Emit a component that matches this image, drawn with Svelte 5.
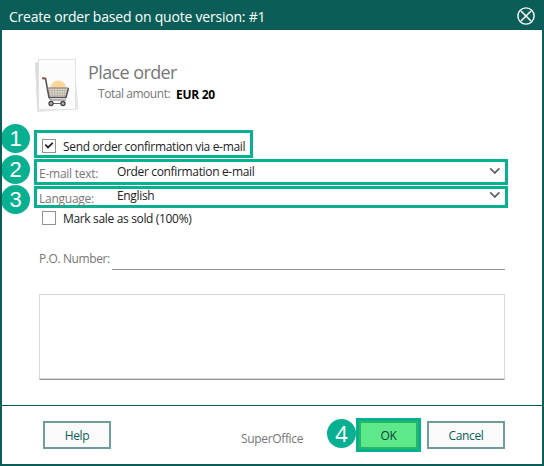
<script>
  let sendConfirmation = $state(true);
  let markSold = $state(false);
</script>

{#snippet chevron()}
  <svg class="chevron" width="12" height="8" viewBox="0 0 12 8"><path d="M1.2 1.3 5.8 5.9 10.4 1.3" fill="none" stroke="#666" stroke-width="1.8" /></svg>
{/snippet}

{#snippet checkbox(checked)}
  <span class="check">
    {#if checked}
      <svg width="12" height="12" viewBox="0 0 12 12"><path d="M2.3 4.5 5 7.4 9.8 2.8" fill="none" stroke="#222" stroke-width="1.8" /></svg>
    {/if}
  </span>
{/snippet}

<div class="dialog">
  <header>
    <h1>Create order based on quote version: #1</h1>
    <svg width="20" height="20" viewBox="0 0 20 20" fill="none" stroke="#fff">
      <circle cx="10" cy="10" r="8.1" stroke-width="1.4" />
      <path d="M5 5 15 15M15 5 5 15" stroke-width="1.5" />
    </svg>
  </header>

  <main>
    <section class="intro">
      <svg width="46" height="58" viewBox="0 0 46 58">
        <path d="M1 8 40 4 44.5 54 3.5 57Z" fill="#e6e6e6" />
        <path d="M1 8 5 7V55L3.5 57Z" fill="#dcdcdc" />
        <rect x="4.5" y="4.5" width="37" height="50" fill="#fcfcfc" stroke="#e2e2e2" />
        <path d="M16 33a8.3 8.3 0 0 1 16.5 0Z" fill="#f9d79a" />
        <path d="M13 33H34L32 42H15Z" fill="#e4dccf" />
        <path d="M15.5 33l.8 9M18 33l.5 9M20.5 33l.3 9M23.3 33v9M26 33l-.3 9M28.7 33l-.7 9M31.3 33l-1 9M13 35.5H34M14 38H33M14.5 40.3H33" fill="none" stroke="#a8a198" stroke-width=".6" />
        <path d="M9 23.5h2.5L15 42.5H32L34.5 33" fill="none" stroke="#56565a" stroke-width="1.6" />
        <path d="M13 33H34.5M15 42.5l1.5 2.5H32" fill="none" stroke="#77777a" stroke-width="1" />
        <path d="M17 48.5H31" stroke="#666" stroke-width="1" />
        <circle cx="17" cy="48.5" r="2" fill="#bbb" stroke="#444" stroke-width="1.3" />
        <circle cx="29" cy="48.5" r="2" fill="#bbb" stroke="#444" stroke-width="1.3" />
        <path d="M8 23.3h3.3" stroke="#a84944" stroke-width="1.8" />
      </svg>
      <div class="headline">
        <h2>Place order</h2>
        <p><span class="amount-label">Total amount:</span><b>EUR 20</b></p>
      </div>
    </section>

    <div class="marked confirm">
      <i class="badge">1</i>
      {@render checkbox(sendConfirmation)}
      <span class="send">Send order confirmation via e-mail</span>
    </div>
    <div class="marked email">
      <i class="badge">2</i>
      <span class="label">E-mail text:</span>
      <span class="value">Order confirmation e-mail</span>
      {@render chevron()}
    </div>
    <div class="marked language">
      <i class="badge">3</i>
      <span class="label">Language:</span>
      <span class="value">English</span>
      {@render chevron()}
    </div>
    <div class="sold">
      {@render checkbox(markSold)}
      <span class="sold-text">Mark sale as sold (100%)</span>
    </div>
    <div class="po">
      <span class="po-label">P.O. Number:</span>
      <span class="line"></span>
    </div>
    <div class="notes"></div>
  </main>

  <footer>
    <div class="button help"><span>Help</span></div>
    <span class="brand">SuperOffice</span>
    <div class="ok-mark">
      <i class="badge">4</i>
      <div class="button ok"><span>OK</span></div>
    </div>
    <div class="button cancel"><span>Cancel</span></div>
  </footer>
</div>

<style>
  .dialog {
    box-sizing: border-box;
    width: 544px;
    height: 466px;
    display: flex;
    flex-direction: column;
    border: 2px solid #0a5e57;
    border-top: 0;
    background: #fff;
    font: 12px/16px "Open Sans", "Noto Sans", sans-serif;
    letter-spacing: -0.34px;
    color: #222;
    white-space: nowrap;
    overflow: hidden;
  }
  h1, h2, p { margin: 0; font-weight: 400; }
  header {
    box-sizing: border-box;
    height: 30px;
    flex: none;
    display: flex;
    justify-content: space-between;
    padding: 6px 6px 0 7px;
    background: #0a5e57;
    color: #fff;
  }
  h1 { font-size: 14px; line-height: 22px; letter-spacing: -0.21px; }
  main { height: 375px; flex: none; display: flex; flex-direction: column; align-items: flex-start; }
  .intro { display: flex; height: 100px; }
  .intro > svg { margin: 25px 0 0 32px; }
  .headline { padding: 30px 0 0 8px; color: #777; }
  h2 { font-size: 18px; line-height: 24px; letter-spacing: -0.6px; }
  p { display: flex; padding: 2px 0 0 10px; }
  .amount-label { width: 78px; letter-spacing: -0.45px; }
  b { color: #000; letter-spacing: -0.3px; padding-top: 1px; }
  .marked {
    position: relative;
    box-sizing: border-box;
    display: flex;
    margin-left: 32px;
    border: 3px solid #08b092;
    width: 474px;
  }
  .confirm { width: 219px; height: 28px; padding: 6px 0 0 5px; }
  .email { height: 26px; margin-top: 1px; }
  .language { height: 22px; margin-top: 1px; }
  .badge {
    position: absolute;
    left: -36px;
    top: -9px;
    width: 29px;
    height: 29px;
    border-radius: 50%;
    background: #08b092;
    color: #fff;
    font: 22px/29px "Liberation Sans", Arial, sans-serif;
    letter-spacing: 0;
    text-align: center;
  }
  .email .badge { top: -7px; }
  .language .badge { top: -4px; }
  .check {
    box-sizing: border-box;
    flex: none;
    width: 14px;
    height: 14px;
    border: 1px solid #929292;
    display: flex;
  }
  .send { margin: 0 0 0 7px; }
  .label { width: 78px; padding: 4px 0 0 2px; box-sizing: border-box; color: #777; letter-spacing: -0.25px; }
  .value { flex: 1; padding: 2px 0 0 2px; }
  .language .label { padding-top: 2px; }
  .language .value { padding-top: 0; margin-top: -1px; }
  .chevron { margin: 5px 4px 0 0; }
  .language .chevron { margin-top: 2px; }
  .sold { display: flex; height: 18px; padding: 3px 0 0 40px; }
  .sold-text { margin-left: 7px; }
  .po { display: flex; height: 41px; width: 503px; box-sizing: border-box; padding: 22px 0 0 37px; color: #777; }
  .po-label { width: 73px; letter-spacing: -0.4px; }
  .line { flex: 1; height: 18px; border-bottom: 1px solid #929292; }
  .notes {
    box-sizing: border-box;
    width: 466px;
    height: 86px;
    margin: 24px 0 0 37px;
    border: 1px solid #d9d9d9;
    box-shadow: inset 0 -1px #d9d9d9;
    border-bottom-color: #929292;
  }
  footer { display: flex; flex: 1; border-top: 1px solid #0a5e57; padding-left: 41px; }
  .button {
    box-sizing: border-box;
    height: 28px;
    border: 2px solid #719c9c;
    background: #fafafa;
    color: #0a5e57;
    text-align: center;
    line-height: 25px;
  }
  .help { width: 68px; margin-top: 15px; }
  .brand { width: 115px; margin: 25px 0 0 130px; color: #777; }
  .ok-mark { position: relative; width: 59px; height: 28px; border: 3px solid #08b092; margin-top: 12px; }
  .ok-mark .badge { left: -32px; top: -2px; font-family: "Open Sans", sans-serif; line-height: 28px; }
  .ok { background: #5de98a; border-color: #28b864; color: #153d38; }
  .cancel { width: 78px; margin: 15px 0 0 6px; }
</style>
